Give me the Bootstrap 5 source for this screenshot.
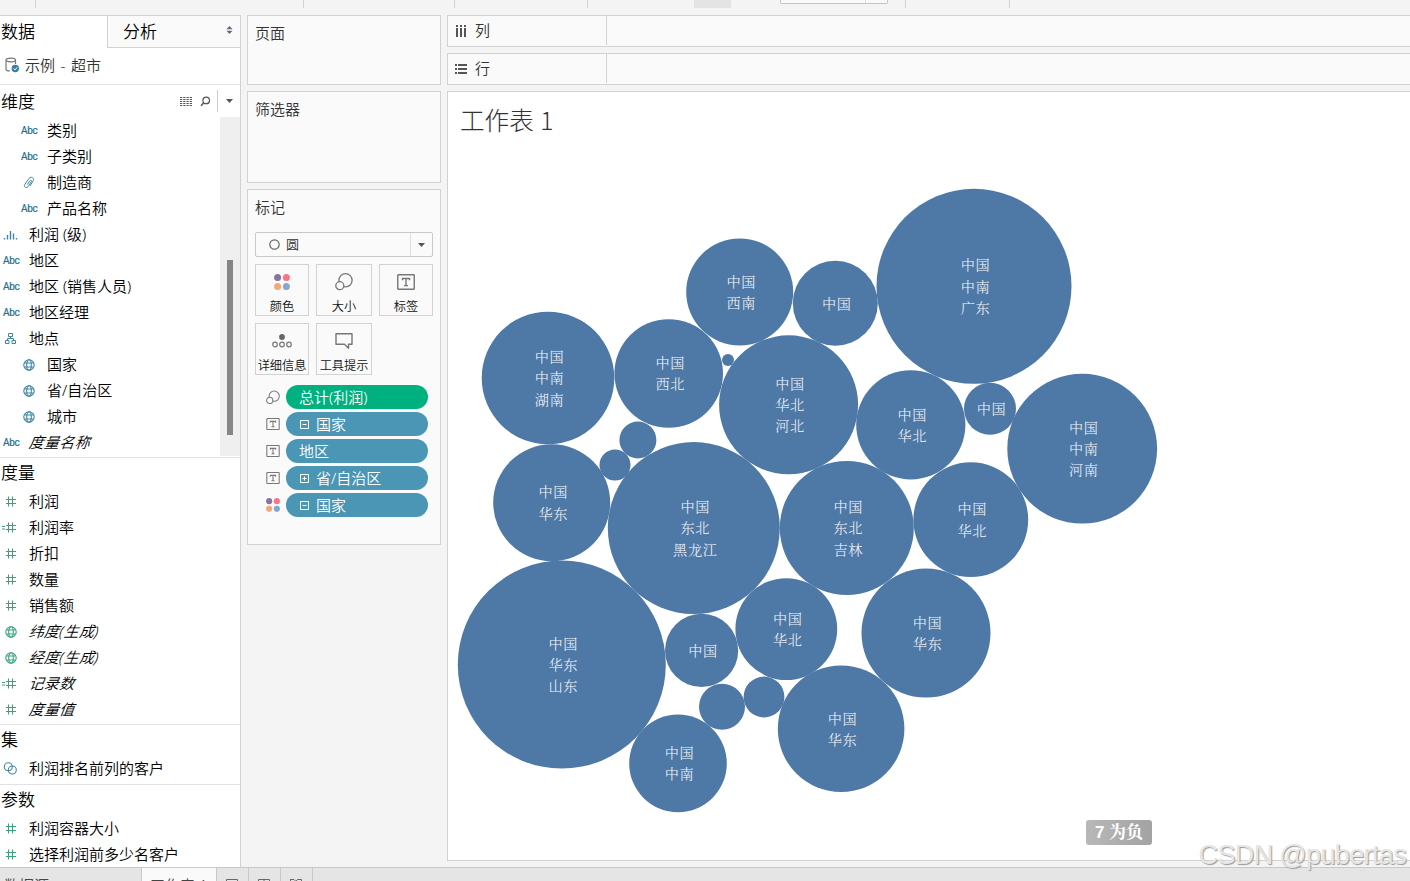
<!DOCTYPE html>
<html lang="zh-CN">
<head>
<meta charset="utf-8">
<title>工作表 1</title>
<link href="https://cdn.jsdelivr.net/npm/bootstrap@5.3.0/dist/css/bootstrap.min.css" rel="stylesheet">
<style>
:root{--line:#d2d2d2;--dim:#3f86a3;--mea:#3aa37c}
body{width:1410px;height:881px;background:#f4f4f4;font:350 15px/26px "Noto Sans","Noto Sans CJK SC",sans-serif;color:#000;overflow:hidden;white-space:nowrap}
svg{display:block;flex:none}
.toolbar-strip{height:15px}
.toolbar-strip i{height:8px;width:1px;background:var(--line);flex:none}
.work-area{height:852px}
.side{width:241px;background:#fff;border:1px solid var(--line);border-width:1px 1px 0 0;flex:none}
.tab-a{width:107px;height:32px;font-size:17px;line-height:32px;padding-left:1px}
.tab-b{height:32px;border:1px solid var(--line);border-width:0 0 1px 1px;background:#fafafa;font-size:17px;line-height:32px;padding:0 7px 0 15px}
.source{height:37px;border-bottom:1px solid #e2e2e2;padding:0 0 2px 5px;color:#333;word-spacing:1.7px}
.sec-title{font-size:17px;height:30px;line-height:29px;padding-left:1px}
.sec{border-bottom:1px solid #e2e2e2}
.field{height:26px;display:flex;align-items:center;line-height:26px}
.field .ico{width:29px;flex:none;display:flex;justify-content:flex-start;padding-left:3px}
.field .ico svg{position:relative;top:.5px}
.field.sub{padding-left:18px}
.field em{transform:skewX(-7deg);letter-spacing:.3px}
.abc{font:400 10px/26px Roboto,sans-serif;color:#20708f;letter-spacing:-.3px;padding-top:1px;-webkit-text-stroke:.2px #20708f}
.scroller{width:20px;height:339px;background:#efefef;padding:143px 7px 0}
.thumb{width:6px;height:175px;background:#858585}
.cards-col{width:194px;margin-left:6px;flex:none}
.shelf{border:1px solid var(--line);background:#fafafa;color:#333}
.shelf-head{padding:3.5px 7px}
.mark-type{height:25px;border:1px solid #c8c8c8;border-radius:2px;margin:11px 7px 7px;font-size:13px;line-height:23px}
.mark-grid{display:grid;grid-template-columns:54px 56px 54px;gap:7px;margin:0 7px;grid-auto-rows:52px}
.mark-btn{border:1px solid var(--line);font-size:12.2px;line-height:15px;color:#111;display:flex;flex-direction:column;align-items:center;padding-top:7px;gap:7px}
.pill-row{height:24px;display:flex;align-items:center;padding-left:18px}
.pill-row svg.lead-ico{width:14px;margin-right:6px}
.pill{width:142px;height:24px;border-radius:12px;background:#4a96b4;color:#fff;line-height:24px;padding-left:13px;display:flex;align-items:center}
.pill.agg{background:#00b180}
.pill svg{margin:0 7px 0 1px}
.shelves{margin-left:6px}
.line-shelf{height:32px;border:1px solid var(--line);border-right:0;background:#fafafa;color:#333;line-height:29px}
.line-head{width:159px;border-right:1px solid var(--line);padding-left:7px}
.view{height:770px;border:1px solid var(--line);border-right:0;background:#fff}
.view-title{height:60px;font:300 24.6px/54px "Noto Sans CJK SC",sans-serif;color:#333;padding-left:12px;word-spacing:1px}
.bubbles text{fill:#f4f6f9;font:300 14.2px "Noto Serif CJK SC","Noto Sans CJK SC",serif;letter-spacing:.6px;text-anchor:middle}
.neg{right:258px;bottom:15px;width:66px;height:25px;border-radius:3px;background:linear-gradient(90deg,#b8b8b8,#a3a3a3);color:#fff;font:bold 17px/25px "Liberation Sans","Noto Serif CJK SC","Noto Sans CJK SC",sans-serif;text-align:center}
.bottom-tabs{height:14px;background:#e5e5e5;border-top:1px solid #c8c8c8;overflow:hidden;font-size:15px;line-height:34px;color:#444}
.bottom-tabs>div{border-right:1px solid #c8c8c8;flex:none;height:30px}
.wm{right:4px;bottom:7px;font:300 27px/38px "Liberation Sans",sans-serif;letter-spacing:-.65px;color:#e6e6e6;text-shadow:1px 1px 1px #999}
</style>
</head>
<body class="position-relative">
<svg width="0" height="0" class="position-absolute">
<defs>
<symbol id="hash" viewBox="0 0 16 12"><path d="M6.500 .5v10M10.500 .5v10M4 3.500h10M4 7.500h10" fill="none" stroke="#3aa37c" stroke-width="1.100"/></symbol>
<symbol id="eqhash" viewBox="0 0 16 12"><path d="M6.500 .5v10M10.500 .5v10M4 3.500h10M4 7.500h10M0 4.500h3M0 7h3" fill="none" stroke="#3aa37c" stroke-width="1.100"/></symbol>
<symbol id="globe" viewBox="0 0 12 12"><g fill="none" stroke="currentColor" stroke-width="1.100"><circle cx="6" cy="6" r="5.200"/><ellipse cx="6" cy="6" rx="2.300" ry="5.200"/><path d="M1.500 4h9M1.500 8h9"/></g></symbol>
<symbol id="tbox" viewBox="0 0 18 16"><rect x=".75" y=".75" width="16.5" height="14.5" rx=".5" fill="none" stroke="#777" stroke-width="1.4"/><path d="M5.500 6.300V4.500h7v1.800M9 4.500v7M7 11.600h4" fill="none" stroke="#777" stroke-width="1.4"/></symbol>
<symbol id="sizes" viewBox="0 0 18 18"><circle cx="10.5" cy="7.3" r="6.6" fill="none" stroke="#777" stroke-width="1.3"/><circle cx="4.8" cy="12.7" r="4" fill="#fafafa" stroke="#777" stroke-width="1.3"/></symbol>
<symbol id="dots" viewBox="0 0 16 16"><circle cx="3.6" cy="3.6" r="3.5" fill="#8a749c"/><circle cx="12.4" cy="3.6" r="3.5" fill="#fb7386"/><circle cx="3.6" cy="12.4" r="3.5" fill="#f4a878"/><circle cx="12.4" cy="12.4" r="3.5" fill="#82a7d0"/></symbol>
<symbol id="minus" viewBox="0 0 9 9"><path d="M.5.5h8v8h-8zM2.500 4.500h4" fill="none" stroke="#fff"/></symbol>
<symbol id="plus" viewBox="0 0 9 9"><path d="M.5.5h8v8h-8zM2.500 4.500h4M4.500 2.500v4" fill="none" stroke="#fff"/></symbol>
</defs></svg>

<div class="toolbar-strip d-flex">
<i style="margin-left:35px"></i><i style="margin-left:267px"></i><i style="margin-left:150px"></i><i style="margin-left:132px"></i>
<div style="width:37px;height:8px;background:#e4e4e4;margin-left:106px"></div>
<div style="width:108px;height:4px;border:1px solid #c6c6c6;border-top:0;border-radius:0 0 2px 2px;margin-left:49px;background:#f9f9f9" class="d-flex justify-content-end"><div style="width:22px;border-left:1px solid #ddd"></div></div>
<i style="margin-left:17px"></i><i style="margin-left:103px"></i>
</div>

<div class="work-area d-flex">
<aside class="side">
 <div class="d-flex"><div class="tab-a">数据</div>
 <div class="tab-b flex-grow-1 d-flex justify-content-between align-items-center"><span>分析</span><svg width="7" height="8" viewBox="0 0 7 8" class="mb-1"><path d="M.5 3.200 3.500 0l3 3.200zM.5 4.800 3.500 8l3-3.200z" fill="#667"/></svg></div></div>
 <div class="source d-flex align-items-center"><svg width="15" height="16" viewBox="0 0 15 16" style="margin-right:5px"><path d="M1 3v9c0 1.400 1.500 2 4 2M10.500 3v4M1 3c0-2.500 9.500-2.500 9.500 0S1 5.500 1 3" fill="none" stroke="#777" stroke-width="1.200"/><circle cx="10.300" cy="11.500" r="3.700" fill="#3a7fa0"/><path d="m8.500 11.500 1.500 1.400 2.300-2.600" fill="none" stroke="#fff"/></svg>示例 - 超市</div>
 <div class="sec">
  <div class="sec-title d-flex align-items-center" style="height:32px"><span class="flex-grow-1">维度</span>
   <svg width="12" height="9" viewBox="0 0 12 9"><path d="M0 .5h12M0 2.500h12M0 4.500h12M0 6.500h12M0 8.500h12" stroke="#555" stroke-dasharray="2.250 1"/></svg>
   <svg width="11" height="11" viewBox="0 0 11 11" style="margin-left:8px"><circle cx="6.200" cy="4.400" r="3.300" fill="none" stroke="#555" stroke-width="1.200"/><path d="M3.800 6.800 1 9.800" stroke="#555" stroke-width="1.500"/></svg>
   <div style="width:1px;height:22px;background:#ccc;margin-left:6px"></div>
   <svg width="7" height="4" viewBox="0 0 7 4" style="margin:0 7px 0 8px"><path d="M0 0h7L3.500 4z" fill="#555"/></svg></div>
  <div class="d-flex" style="height:340px">
   <div class="flex-grow-1">
    <div class="field sub"><span class="ico abc">Abc</span>类别</div>
    <div class="field sub"><span class="ico abc">Abc</span>子类别</div>
    <div class="field sub"><span class="ico" style="padding-left:5px"><svg width="12" height="13" viewBox="0 0 12 13"><path d="M4.300 8.600 7 4.700c.8-1.100 2.100-.2 1.400.9L5 10.600c-1.500 2.200-4.700.2-3.300-2L6 2.400C7.800-.1 11.800 1.900 10.300 4.600L7 10" fill="none" stroke="#3f86a3"/></svg></span>制造商</div>
    <div class="field sub"><span class="ico abc">Abc</span>产品名称</div>
    <div class="field"><span class="ico"><svg width="15" height="10" viewBox="0 0 15 10"><path d="M1.500 8v1.500M4.500 5v4.500M7.500 1v8.500M10.500 3.500v6M13.500 8v1.500" stroke="#3f86a3" stroke-width="1.400"/></svg></span>利润 (级)</div>
    <div class="field"><span class="ico abc">Abc</span>地区</div>
    <div class="field"><span class="ico abc">Abc</span>地区 (销售人员)</div>
    <div class="field"><span class="ico abc">Abc</span>地区经理</div>
    <div class="field"><span class="ico" style="padding-left:5px"><svg width="11" height="11" viewBox="0 0 11 11"><path d="M3.500.5h4v3h-4zM5.500 3.500v2M2.500 7.500v-2h6v2M.5 7.500h3.500v3H.5zM7 7.500h3.500v3H7z" fill="none" stroke="#3f86a3"/></svg></span>地点</div>
    <div class="field sub"><span class="ico" style="padding-left:5px;color:var(--dim)"><svg width="12" height="12"><use href="#globe"/></svg></span>国家</div>
    <div class="field sub"><span class="ico" style="padding-left:5px;color:var(--dim)"><svg width="12" height="12"><use href="#globe"/></svg></span>省/自治区</div>
    <div class="field sub"><span class="ico" style="padding-left:5px;color:var(--dim)"><svg width="12" height="12"><use href="#globe"/></svg></span>城市</div>
    <div class="field"><span class="ico abc">Abc</span><em>度量名称</em></div>
   </div>
   <div class="scroller"><div class="thumb"></div></div>
  </div>
 </div>
 <div class="sec" style="height:267px">
  <div class="sec-title">度量</div>
  <div class="field"><span class="ico" style="padding-left:2px"><svg width="16" height="12"><use href="#hash"/></svg></span>利润</div>
  <div class="field"><span class="ico" style="padding-left:2px"><svg width="16" height="12"><use href="#eqhash"/></svg></span>利润率</div>
  <div class="field"><span class="ico" style="padding-left:2px"><svg width="16" height="12"><use href="#hash"/></svg></span>折扣</div>
  <div class="field"><span class="ico" style="padding-left:2px"><svg width="16" height="12"><use href="#hash"/></svg></span>数量</div>
  <div class="field"><span class="ico" style="padding-left:2px"><svg width="16" height="12"><use href="#hash"/></svg></span>销售额</div>
  <div class="field"><span class="ico" style="padding-left:5px;color:var(--mea)"><svg width="12" height="12"><use href="#globe"/></svg></span><em>纬度(生成)</em></div>
  <div class="field"><span class="ico" style="padding-left:5px;color:var(--mea)"><svg width="12" height="12"><use href="#globe"/></svg></span><em>经度(生成)</em></div>
  <div class="field"><span class="ico" style="padding-left:2px"><svg width="16" height="12"><use href="#eqhash"/></svg></span><em>记录数</em></div>
  <div class="field"><span class="ico" style="padding-left:2px"><svg width="16" height="12"><use href="#hash"/></svg></span><em>度量值</em></div>
 </div>
 <div class="sec" style="height:60px">
  <div class="sec-title">集</div>
  <div class="field"><span class="ico"><svg width="15" height="13" viewBox="0 0 15 13"><circle cx="5.300" cy="4.800" r="4" fill="none" stroke="#3f86a3" stroke-width="1.100"/><circle cx="9.300" cy="8" r="4" fill="none" stroke="#3f86a3" stroke-width="1.100"/></svg></span>利润排名前列的客户</div>
 </div>
 <div>
  <div class="sec-title">参数</div>
  <div class="field"><span class="ico" style="padding-left:2px"><svg width="16" height="12"><use href="#hash"/></svg></span>利润容器大小</div>
  <div class="field"><span class="ico" style="padding-left:2px"><svg width="16" height="12"><use href="#hash"/></svg></span>选择利润前多少名客户</div>
 </div>
</aside>

<div class="cards-col d-flex flex-column">
 <div class="shelf" style="height:70px"><div class="shelf-head">页面</div></div>
 <div class="shelf" style="height:92px;margin:6px 0"><div class="shelf-head">筛选器</div></div>
 <div class="shelf" style="height:356px">
  <div class="shelf-head" style="height:31px">标记</div>
  <div class="mark-type d-flex align-items-center"><svg width="11" height="11" viewBox="0 0 11 11" style="margin:0 6px 0 13px"><circle cx="5.500" cy="5.500" r="4.700" fill="none" stroke="#666" stroke-width="1.200"/></svg><span class="flex-grow-1">圆</span><div class="h-100 d-flex align-items-center" style="border-left:1px solid #ddd;padding:0 7px"><svg width="7" height="4" viewBox="0 0 7 4"><path d="M0 0h7L3.500 4z" fill="#555"/></svg></div></div>
  <div class="mark-grid">
   <div class="mark-btn"><svg width="16" height="20" viewBox="0 0 16 16"><use href="#dots" width="16" height="16"/></svg>颜色</div>
   <div class="mark-btn"><svg width="18" height="20" viewBox="0 0 18 18"><use href="#sizes" width="18" height="18"/></svg>大小</div>
   <div class="mark-btn"><svg width="18" height="20" viewBox="0 0 18 16"><use href="#tbox" width="18" height="16"/></svg>标签</div>
   <div class="mark-btn"><svg width="20" height="20" viewBox="0 0 20 20"><circle cx="10" cy="6" r="2.900" fill="#666"/><g fill="none" stroke="#777" stroke-width="1.200"><circle cx="3" cy="13.500" r="2.300"/><circle cx="10" cy="13.500" r="2.300"/><circle cx="17" cy="13.500" r="2.300"/></g></svg>详细信息</div>
   <div class="mark-btn"><svg width="18" height="20" viewBox="0 0 18 20"><path d="M1 2.700h16v10.500h-3.500v4l-4-4H1z" fill="none" stroke="#777" stroke-width="1.400" stroke-linejoin="round"/></svg>工具提示</div>
  </div>
  <div class="d-flex flex-column" style="gap:3px;margin-top:10px">
   <div class="pill-row"><svg class="lead-ico" height="15"><use href="#sizes"/></svg><div class="pill agg">总计(利润)</div></div>
   <div class="pill-row"><svg class="lead-ico" height="12"><use href="#tbox"/></svg><div class="pill"><svg width="9" height="9"><use href="#minus"/></svg>国家</div></div>
   <div class="pill-row"><svg class="lead-ico" height="12"><use href="#tbox"/></svg><div class="pill">地区</div></div>
   <div class="pill-row"><svg class="lead-ico" height="12"><use href="#tbox"/></svg><div class="pill"><svg width="9" height="9"><use href="#plus"/></svg>省/自治区</div></div>
   <div class="pill-row"><svg class="lead-ico" height="14"><use href="#dots"/></svg><div class="pill"><svg width="9" height="9"><use href="#minus"/></svg>国家</div></div>
  </div>
 </div>
</div>

<main class="shelves flex-grow-1">
 <div class="line-shelf"><div class="line-head d-flex align-items-center"><svg width="12" height="12" viewBox="0 0 12 12" style="margin-right:8px"><path d="M2 0v2M6 0v2M10 0v2M2 3v9M6 3v9M10 3v9" stroke="#555" stroke-width="2"/></svg>列</div></div>
 <div class="line-shelf" style="margin:6px 0"><div class="line-head d-flex align-items-center"><svg width="12" height="10" viewBox="0 0 12 10" style="margin-right:8px"><path d="M0 1h2M0 5h2M0 9h2M3 1h9M3 5h9M3 9h9" stroke="#555" stroke-width="2"/></svg>行</div></div>
 <div class="view position-relative">
  <div class="view-title">工作表 1</div>
  <svg class="bubbles" id="bubbles" width="962" height="708" viewBox="448 152 962 708"></svg>
  <div class="neg position-absolute">7 为负</div>
 </div>
</main>
</div>

<div class="bottom-tabs d-flex">
 <div style="width:142px;padding-left:4px">数据源</div>
 <div style="width:75px;background:#fafafa;padding-left:8px">工作表 1</div>
 <div style="width:32px;padding:11px 9px"><svg width="12" height="9" viewBox="0 0 12 9"><path d="M.5 9V.5h11V9M2 5h8" fill="none" stroke="#666"/></svg></div>
 <div style="width:32px;padding:11px 9px"><svg width="12" height="9" viewBox="0 0 12 9"><path d="M.5 9V.5h11V9M6 .5V9M.5 5h11" fill="none" stroke="#666"/></svg></div>
 <div style="width:32px;padding:11px 9px"><svg width="12" height="9" viewBox="0 0 12 9"><path d="M0 .5h4l2 2M.5.500V9M11.500.500h-4L4.500 4v5M11.500.500V9" fill="none" stroke="#666"/></svg></div>
</div>
<div class="wm position-absolute">CSDN @pubertas</div>

<script src="https://cdn.jsdelivr.net/npm/bootstrap@5.3.0/dist/js/bootstrap.bundle.min.js"></script>
<script>
// centre x, centre y, radius, label lines
const data=[
[548,378,66.3,'中国 中南 湖南'],[668.7,373.5,54.3,'中国 西北'],[739.7,292,53.5,'中国 西南'],[835.3,303.3,42.5,'中国'],
[974,286.3,97.5,'中国 中南 广东'],[728,360,6,''],[788.6,404.8,69.5,'中国 华北 河北'],[910.8,424.8,54.6,'中国 华北'],
[990,408.8,26,'中国'],[1082.2,448.7,74.9,'中国 中南 河南'],[637.9,440,18.5,''],[615,465,15.5,''],
[551.7,502.7,58.5,'中国 华东'],[693.8,528.1,86,'中国 东北 黑龙江'],[846.8,528,67,'中国 东北 吉林'],[970.8,519.7,57.4,'中国 华北'],
[561.8,664.6,104,'中国 华东 山东'],[701.6,650.4,36.6,'中国'],[786.3,629.1,50.9,'中国 华北'],[926,633.1,64.5,'中国 华东'],
[722,706.8,23,''],[764,697,20.4,''],[841.1,728.8,63.3,'中国 华东'],[678,763.4,48.8,'中国 中南']];
document.getElementById('bubbles').innerHTML=data.map(([x,y,r,t])=>{
 const l=t?t.split(' '):[];
 return `<circle cx="${x}" cy="${y}" r="${r}" fill="#4e79a7"/>`+
 l.map((s,i)=>`<text x="${x+1.5}" y="${y+5.3+(i-(l.length-1)/2)*21.2}">${s}</text>`).join('');
}).join('');
</script>
</body>
</html>
